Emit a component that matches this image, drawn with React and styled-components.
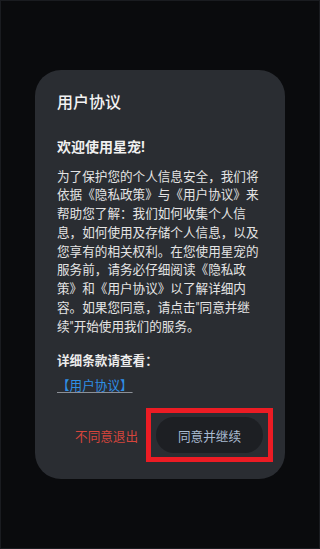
import React from 'react'
import styled, { createGlobalStyle } from 'styled-components'

const Global = createGlobalStyle`
  html, body {
    margin: 0;
    padding: 0;
    background: #0a0b0d;
  }
  body {
    font-family: Roboto, "Noto Sans CJK SC", sans-serif;
  }
`

const Screen = styled.div`
  height: 549px;
  display: flex;
  align-items: center;
  justify-content: center;
  background: #0a0b0d;
  box-shadow: inset 0 0 0 1px #1a1c20;
`

const Card = styled.div`
  width: 250px;
  box-sizing: border-box;
  padding: 21px 22px 17px 22px;
  background: #2a2d32;
  border-radius: 26px;
  display: flex;
  flex-direction: column;
  color: #e8e8e8;
`

const Title = styled.h2`
  margin: 0;
  font-size: 16px;
  line-height: 24px;
  font-weight: 500;
  color: #f3f3f3;
`

const Welcome = styled.h3`
  margin: 22px 0 0;
  font-size: 14px;
  line-height: 20px;
  font-weight: 700;
  color: #f0f0f0;
`

const Body = styled.p`
  margin: 11px 0 0;
  font-size: 12.6px;
  line-height: 18.75px;
  color: #e4e4e4;
  line-break: strict;
`

const Label = styled.div`
  margin-top: 15px;
  font-size: 12.6px;
  line-height: 19px;
  font-weight: 700;
  color: #ececec;
`

const LinkText = styled.a`
  margin-top: 6px;
  align-self: flex-start;
  font-size: 12.6px;
  line-height: 19px;
  color: #2f8fe6;
  text-decoration: underline;
  text-decoration-color: #8c9097;
  text-underline-offset: 2px;
`

const Actions = styled.div`
  margin: 13px -10px 0 0;
  display: flex;
  align-items: center;
  justify-content: flex-end;
  gap: 8px;
`

const Decline = styled.button`
  border: none;
  background: none;
  padding: 0;
  font-family: inherit;
  font-size: 12.6px;
  color: #d6453c;
  cursor: pointer;
`

const Highlight = styled.div`
  border: 5px solid #ec1c24;
  padding: 4px 5px;
  display: flex;
`

const Accept = styled.button`
  width: 107px;
  height: 36px;
  border: none;
  border-radius: 18px;
  background: #1d1f23;
  color: #a9bbd2;
  font-family: inherit;
  font-size: 12.6px;
  cursor: pointer;
`

export default function App() {
  return (
    <>
      <Global />
      <Screen>
        <Card>
          <Title>用户协议</Title>
          <Welcome>欢迎使用星宠!</Welcome>
          <Body>
            为了保护您的个人信息安全，我们将依据《隐私政策》与《用户协议》来帮助您了解：我们如何收集个人信息，如何使用及存储个人信息，以及您享有的相关权利。在您使用星宠的服务前，请务必仔细阅读《隐私政策》和《用户协议》以了解详细内容。如果您同意，请点击"同意并继续"开始使用我们的服务。
          </Body>
          <Label>详细条款请查看：</Label>
          <LinkText href="#">【用户协议】</LinkText>
          <Actions>
            <Decline>不同意退出</Decline>
            <Highlight>
              <Accept>同意并继续</Accept>
            </Highlight>
          </Actions>
        </Card>
      </Screen>
    </>
  )
}
